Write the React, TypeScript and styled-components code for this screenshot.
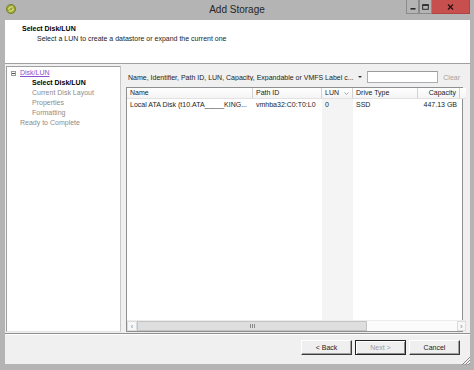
import styled, { createGlobalStyle } from "styled-components";

const GlobalStyle = createGlobalStyle`
  html, body {
    margin: 0;
    padding: 0;
    background: #b4b4b4;
  }
  body {
    font-family: "Liberation Sans", Arial, sans-serif;
    font-size: 7px;
    color: #1c1c1c;
  }
`;

const Window = styled.div`
  position: relative;
  width: 474px;
  height: 370px;
  background: #b4b4b4;
  display: flex;
  flex-direction: column;
  overflow: hidden;
`;

const TitleBar = styled.div`
  height: 20px;
  flex-shrink: 0;
  display: grid;
  grid-template-columns: 1fr auto 1fr;
  align-items: start;
`;

const AppIcon = styled.div`
  padding: 4px 0 0 6px;
  line-height: 0;
`;

const Title = styled.div`
  font-size: 10px;
  line-height: 20px;
  color: #262626;
`;

const Controls = styled.div`
  justify-self: end;
  display: flex;
  margin-right: 4px;
`;

const Ctl = styled.div<{ $close?: boolean }>`
  width: ${(p) => (p.$close ? "38px" : "13px")};
  height: 14px;
  box-sizing: border-box;
  display: flex;
  align-items: center;
  justify-content: center;
  background: ${(p) => (p.$close ? "#c7504f" : "#b4b4b4")};
  border: 1px solid ${(p) => (p.$close ? "#b04442" : "#8a8a8a")};
  border-top: none;
  border-left: ${(p) => (p.$close ? "none" : "1px solid #8a8a8a")};
`;

const Client = styled.div`
  flex: 1;
  min-height: 0;
  margin: 0 4px 6px 5px;
  background: #f0f0f0;
  display: flex;
  flex-direction: column;
`;

const Header = styled.div`
  height: 44px;
  box-sizing: border-box;
  flex-shrink: 0;
  background: #fff;
  border-bottom: 1px solid #a0a0a0;
  padding: 4px 0 0 17px;
`;

const HeaderTitle = styled.div`
  font-weight: bold;
  line-height: 10px;
  color: #000;
`;

const HeaderSub = styled.div`
  line-height: 10px;
  margin-left: 15px;
`;

const Body = styled.div`
  flex: 1;
  min-height: 0;
  display: flex;
  padding-top: 2px;
`;

const Nav = styled.div`
  width: 115px;
  margin: 0 0 1px 1px;
  box-sizing: border-box;
  background: #fff;
  border: 1px solid #a0a0a0;
  border-right-color: #c8c8c8;
  border-bottom-color: #e4e4e4;
  padding: 1px 0 0 4px;
`;

const NavItem = styled.div<{ $level: number; $current?: boolean }>`
  display: flex;
  align-items: center;
  line-height: 10px;
  padding-left: ${(p) => (p.$level === 0 ? 9 : 21)}px;
  font-weight: ${(p) => (p.$current ? "bold" : "normal")};
  color: ${(p) => (p.$current ? "#000" : "#8c8c8c")};
`;

const TreeRow = styled.div`
  display: flex;
  align-items: center;
  gap: 4px;
  line-height: 10px;
`;

const Expander = styled.div`
  width: 5px;
  height: 5px;
  border: 1px solid #9a9a9a;
  box-sizing: border-box;
  display: flex;
  align-items: center;
  justify-content: center;
  &::after {
    content: "";
    width: 3px;
    height: 1px;
    background: #555;
  }
`;

const Link = styled.span`
  color: #8a4fd0;
  text-decoration: underline;
`;

const Main = styled.div`
  flex: 1;
  min-width: 0;
  display: flex;
  flex-direction: column;
  padding: 5px 7px 1px 5px;
`;

const FilterRow = styled.div`
  height: 12px;
  flex-shrink: 0;
  display: flex;
  align-items: center;
  margin-bottom: 4px;
`;

const FilterLabel = styled.div`
  flex: 1;
  padding-left: 2px;
  white-space: nowrap;
  overflow: hidden;
`;

const DropArrow = styled.div`
  width: 8px;
  display: flex;
  justify-content: center;
  &::after {
    content: "";
    border-left: 2px solid transparent;
    border-right: 2px solid transparent;
    border-top: 2px solid #333;
  }
`;

const SearchBox = styled.div`
  width: 71px;
  height: 12px;
  box-sizing: border-box;
  margin-left: 3px;
  background: #fff;
  border: 1px solid #abadb3;
  border-top-color: #9a9a9a;
`;

const Clear = styled.div`
  margin: 0 3px 0 5px;
  color: #a3a3a3;
`;

const Table = styled.div`
  flex: 1;
  min-height: 0;
  box-sizing: border-box;
  background: #fff;
  border: 1px solid #8e8f8f;
  display: grid;
  grid-template-columns: 126px 69px 31px 65px 42px 1fr;
  grid-template-rows: 11px 11px 1fr 11px;
`;

const HeadCell = styled.div<{ $right?: boolean; $plain?: boolean }>`
  box-sizing: border-box;
  line-height: 10px;
  padding: 0 3px;
  white-space: nowrap;
  display: flex;
  align-items: center;
  justify-content: ${(p) => (p.$right ? "flex-end" : "space-between")};
  background: linear-gradient(#ffffff, #f4f4f4);
  border-bottom: 1px solid #e2e2e2;
  border-right: ${(p) => (p.$plain ? "none" : "1px solid #d2d2d2")};
`;

const Cell = styled.div<{ $right?: boolean; $sorted?: boolean }>`
  line-height: 11px;
  padding: 0 3px;
  white-space: nowrap;
  overflow: hidden;
  text-align: ${(p) => (p.$right ? "right" : "left")};
  background: ${(p) => (p.$sorted ? "#f4f4f4" : "transparent")};
`;

const ScrollBar = styled.div`
  grid-column: 1 / -1;
  display: flex;
  background: #fbfbfb;
  border-top: 1px solid #ececec;
`;

const ScrollArrow = styled.div<{ $w: number }>`
  width: ${(p) => p.$w}px;
  display: flex;
  align-items: center;
  justify-content: center;
  color: #7a7a7a;
  font-size: 7px;
  background: #f7f7f7;
  border: 1px solid #dcdcdc;
  box-sizing: border-box;
`;

const Thumb = styled.div`
  width: 230px;
  box-sizing: border-box;
  background: #dedede;
  border: 1px solid #c4c4c4;
  display: flex;
  align-items: center;
  justify-content: center;
  gap: 1px;
`;

const Grip = styled.span`
  width: 1px;
  height: 4px;
  background: #8a8a8a;
`;

const Track = styled.div`
  flex: 1;
`;

const Separator = styled.div`
  height: 2px;
  box-sizing: border-box;
  flex-shrink: 0;
  border-top: 1px solid #8f8f8f;
  border-bottom: 1px solid #ffffff;
`;

const ButtonBar = styled.div`
  height: 29px;
  flex-shrink: 0;
  display: flex;
  justify-content: flex-end;
  align-items: flex-start;
  gap: 3px;
  padding: 5px 10px 0 0;
  box-sizing: border-box;
`;

const Button = styled.div<{ $default?: boolean; $disabled?: boolean }>`
  width: 51px;
  height: 15px;
  box-sizing: border-box;
  display: flex;
  align-items: center;
  justify-content: center;
  background: #efefef;
  color: ${(p) => (p.$disabled ? "#9c9c9c" : "#1c1c1c")};
  border: 1px solid;
  border-color: ${(p) =>
    p.$default ? "#222 #222 #222 #222" : "#ffffff #3c3c3c #3c3c3c #ffffff"};
  box-shadow: ${(p) =>
    p.$default
      ? "inset 1px 1px #ffffff, inset -1px -1px #8a8a8a"
      : "inset -1px -1px #a0a0a0"};
`;

const Grip3 = styled.div`
  position: absolute;
  right: 3px;
  bottom: 4px;
  line-height: 0;
`;

const columns = ["Name", "Path ID", "LUN", "Drive Type", "Capacity"];

function SortMark() {
  return (
    <svg width="5" height="3" viewBox="0 0 5 3">
      <path d="M0.5 0.5 L2.5 2.5 L4.5 0.5" fill="none" stroke="#9a9a9a" strokeWidth="0.9" />
    </svg>
  );
}

export default function App() {
  return (
    <>
      <GlobalStyle />
      <Window>
        <TitleBar>
          <AppIcon>
            <svg width="10" height="10" viewBox="0 0 10 10">
              <circle cx="5" cy="5" r="4.6" fill="#97a63a" stroke="#6d7a22" strokeWidth="0.8" />
              <path d="M2.6 5.6 C3 3.4 5 2.4 7 3.2" fill="none" stroke="#e6e07a" strokeWidth="1.3" />
              <path d="M7.4 4.4 C7 6.6 5 7.6 3 6.8" fill="none" stroke="#e6e07a" strokeWidth="1.3" />
            </svg>
          </AppIcon>
          <Title>Add Storage</Title>
          <Controls>
            <Ctl>
              <svg width="6" height="6" viewBox="0 0 6 6">
                <rect x="0.5" y="4" width="5" height="1.6" fill="#2a2a2a" />
              </svg>
            </Ctl>
            <Ctl>
              <svg width="7" height="6" viewBox="0 0 7 6">
                <rect x="0.7" y="0.7" width="5.6" height="4.6" fill="none" stroke="#2a2a2a" strokeWidth="1" />
                <rect x="0.5" y="0.5" width="6" height="1.4" fill="#2a2a2a" />
              </svg>
            </Ctl>
            <Ctl $close>
              <svg width="7" height="6" viewBox="0 0 7 6">
                <path d="M1 0.6 L6 5.4 M6 0.6 L1 5.4" stroke="#2b1414" strokeWidth="1.4" />
              </svg>
            </Ctl>
          </Controls>
        </TitleBar>

        <Client>
          <Header>
            <HeaderTitle>Select Disk/LUN</HeaderTitle>
            <HeaderSub>Select a LUN to create a datastore or expand the current one</HeaderSub>
          </Header>

          <Body>
            <Nav>
              <TreeRow>
                <Expander />
                <Link>Disk/LUN</Link>
              </TreeRow>
              <NavItem $level={1} $current>
                Select Disk/LUN
              </NavItem>
              <NavItem $level={1}>Current Disk Layout</NavItem>
              <NavItem $level={1}>Properties</NavItem>
              <NavItem $level={1}>Formatting</NavItem>
              <NavItem $level={0}>Ready to Complete</NavItem>
            </Nav>

            <Main>
              <FilterRow>
                <FilterLabel>
                  Name, Identifier, Path ID, LUN, Capacity, Expandable or VMFS Label c...
                </FilterLabel>
                <DropArrow />
                <SearchBox />
                <Clear>Clear</Clear>
              </FilterRow>

              <Table>
                {columns.map((c) => (
                  <HeadCell key={c} $right={c === "Capacity"}>
                    {c}
                    {c === "LUN" && <SortMark />}
                  </HeadCell>
                ))}
                <HeadCell $plain />

                <Cell>Local ATA Disk (t10.ATA_____KING...</Cell>
                <Cell>vmhba32:C0:T0:L0</Cell>
                <Cell $sorted>0</Cell>
                <Cell>SSD</Cell>
                <Cell $right>447.13 GB</Cell>
                <Cell />

                <Cell />
                <Cell />
                <Cell $sorted />
                <Cell />
                <Cell />
                <Cell />

                <ScrollBar>
                  <ScrollArrow $w={10}>‹</ScrollArrow>
                  <Thumb>
                    <Grip />
                    <Grip />
                    <Grip />
                  </Thumb>
                  <Track />
                  <ScrollArrow $w={9}>›</ScrollArrow>
                </ScrollBar>
              </Table>
            </Main>
          </Body>

          <Separator />

          <ButtonBar>
            <Button>&lt; Back</Button>
            <Button $default $disabled>
              Next &gt;
            </Button>
            <Button>Cancel</Button>
          </ButtonBar>
        </Client>

        <Grip3>
          <svg width="11" height="11" viewBox="0 0 11 11">
            <path d="M10 2 L2 10 M10 5 L5 10 M10 8 L8 10" stroke="#8a8a8a" strokeWidth="1" />
          </svg>
        </Grip3>
      </Window>
    </>
  );
}
